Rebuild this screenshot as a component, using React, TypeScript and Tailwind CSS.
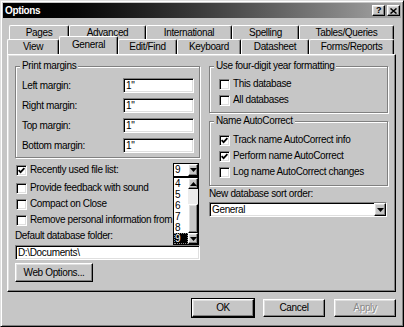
import React from "react";

const raised =
  "bg-[#c6c6c6] border border-t-white border-l-white border-b-black border-r-black shadow-[inset_-1px_-1px_0_#808080,inset_1px_1px_0_#dfdfdf]";
const sunken =
  "bg-white border border-t-[#808080] border-l-[#808080] border-b-white border-r-white shadow-[inset_1px_1px_0_#000,inset_-1px_-1px_0_#dfdfdf]";

function Check({ checked }: { checked?: boolean }) {
  return (
    <span className={`w-[11px] h-[11px] shrink-0 flex items-center justify-center ${sunken}`}>
      {checked && (
        <svg width="7" height="7" viewBox="0 0 7 7">
          <path d="M0.6 3.2 L2.6 5.2 L6.4 1.2" fill="none" stroke="#000" strokeWidth="1.7" />
        </svg>
      )}
    </span>
  );
}

function CheckRow({ checked, label }: { checked?: boolean; label: string }) {
  return (
    <div className="flex items-center h-[16px] gap-[3px] whitespace-nowrap">
      <Check checked={checked} />
      <span>{label}</span>
    </div>
  );
}

function Group({
  title,
  className,
  children,
}: {
  title: string;
  className?: string;
  children: React.ReactNode;
}) {
  return (
    <div
      className={`relative border border-[#808080] shadow-[inset_1px_1px_0_#fff,1px_1px_0_#fff] ${className ?? ""}`}
    >
      <span className="absolute -top-[7px] left-[4px] px-[2px] bg-[#c6c6c6] leading-[12px] whitespace-nowrap">
        {title}
      </span>
      {children}
    </div>
  );
}

function DownArrow() {
  return (
    <svg width="7" height="4" viewBox="0 0 7 4">
      <path d="M0 0h7L3.5 4z" fill="#000" />
    </svg>
  );
}
function UpArrow() {
  return (
    <svg width="7" height="4" viewBox="0 0 7 4">
      <path d="M0 4h7L3.5 0z" fill="#000" />
    </svg>
  );
}

function MarginRow({ label }: { label: string }) {
  return (
    <div className="flex items-center justify-between h-[15px]">
      <span>{label}</span>
      <span className={`w-[71px] h-[15px] flex items-center px-[2px] ${sunken}`}>1"</span>
    </div>
  );
}

function Tab({ label, w, selected }: { label: string; w: string; selected?: boolean }) {
  return (
    <div
      className={`${w} ${
        selected ? "h-[18px] -mt-[2px] relative z-10 pb-[2px]" : "h-full"
      } shrink-0 bg-[#c6c6c6] border-t border-l border-r border-t-white border-l-white border-r-black shadow-[inset_-1px_0_0_#808080] rounded-t-[2px] flex items-center justify-center whitespace-nowrap`}
    >
      {label}
    </div>
  );
}

export default function App() {
  const items = ["4", "5", "6", "7", "8", "9"];
  return (
    <div className="w-[404px] h-[327px] bg-[#c6c6c6] border border-t-[#dfdfdf] border-l-[#dfdfdf] border-b-black border-r-black shadow-[inset_1px_1px_0_#fff,inset_-1px_-1px_0_#808080] p-[2px] flex flex-col font-['Liberation_Sans',Arial,sans-serif] text-[10px] leading-[12px] tracking-[-0.35px] text-black overflow-hidden">
      {/* Title bar */}
      <div className="h-[15px] shrink-0 bg-gradient-to-r from-[#000] via-[#3c3c3c] to-[#a8a8a8] flex items-center justify-between pl-[2px] pr-[1px]">
        <span className="text-white font-bold text-[10px]">Options</span>
        <div className="flex gap-[2px]">
          <span className={`w-[13px] h-[11px] flex items-center justify-center font-bold text-[9px] leading-none ${raised}`}>
            ?
          </span>
          <span className={`w-[13px] h-[11px] flex items-center justify-center ${raised}`}>
            <svg width="7" height="6" viewBox="0 0 7 6">
              <path d="M0.5 0.5L6.5 5.5M6.5 0.5L0.5 5.5" stroke="#000" strokeWidth="1.5" />
            </svg>
          </span>
        </div>
      </div>

      {/* Tabs */}
      <div className="flex ml-[6px] mt-[7px] h-[14px] shrink-0">
        <Tab label="Pages" w="w-[60px]" />
        <Tab label="Advanced" w="w-[77px]" />
        <Tab label="International" w="w-[86px]" />
        <Tab label="Spelling" w="w-[67px]" />
        <Tab label="Tables/Queries" w="w-[95px]" />
      </div>
      <div className="flex ml-[4px] h-[15px] shrink-0 items-end">
        <Tab label="View" w="w-[52px]" />
        <Tab label="General" w="w-[59px]" selected />
        <Tab label="Edit/Find" w="w-[59px]" />
        <Tab label="Keyboard" w="w-[64px]" />
        <Tab label="Datasheet" w="w-[68px]" />
        <Tab label="Forms/Reports" w="w-[85px]" />
      </div>

      {/* Panel */}
      <div className="ml-[4px] w-[389px] h-[238px] shrink-0 border border-t-white border-l-white border-b-black border-r-black shadow-[inset_-1px_-1px_0_#808080,inset_1px_1px_0_#dfdfdf] pt-[11px] pl-[7px] flex gap-[9px]">
        {/* Left column */}
        <div className="w-[185px] flex flex-col">
          <Group title="Print margins" className="h-[92px] pt-[11px] pl-[6px] pr-[5px] flex flex-col gap-[5px]">
            <MarginRow label="Left margin:" />
            <MarginRow label="Right margin:" />
            <MarginRow label="Top margin:" />
            <MarginRow label="Bottom margin:" />
          </Group>

          <div className="mt-[5px] h-[14px] flex items-center justify-between pl-[1px] pr-[1px]">
            <div className="flex items-center gap-[3px] whitespace-nowrap">
              <Check checked />
              <span>Recently used file list:</span>
            </div>
            <div className="relative w-[26px] h-[14px]">
              <div className="w-full h-full bg-white border border-black flex items-stretch">
                <span className="flex-1 flex items-center pl-[1px]">9</span>
                <span className={`w-[10px] flex items-center justify-center ${raised}`}>
                  <DownArrow />
                </span>
              </div>
              {/* dropdown list */}
              <div className="absolute top-[14px] left-0 w-[26px] h-[68px] bg-white border border-black z-20 flex">
                <div className="flex-1 flex flex-col">
                  {items.map((n) => (
                    <span
                      key={n}
                      className={`h-[11px] leading-[11px] pl-[1px] ${
                        n === "9" ? "bg-black text-white outline-1 outline-dotted outline-[#888] -outline-offset-1" : ""
                      }`}
                    >
                      {n}
                    </span>
                  ))}
                </div>
                <div className="w-[10px] flex flex-col">
                  <span className={`h-[11px] flex items-center justify-center ${raised}`}>
                    <UpArrow />
                  </span>
                  <span className="h-[15px] bg-[#ececec]" />
                  <span className={`flex-1 ${raised}`} />
                  <span className={`h-[11px] flex items-center justify-center ${raised}`}>
                    <DownArrow />
                  </span>
                </div>
              </div>
            </div>
          </div>

          <div className="mt-[3px] pl-[1px] w-[158px] flex flex-col overflow-hidden">
            <CheckRow label="Provide feedback with sound" />
            <CheckRow label="Compact on Close" />
            <CheckRow label="Remove personal information from file properties on save" />
          </div>

          <div className="mt-[2px] h-[12px] whitespace-nowrap">Default database folder:</div>
          <div className={`mt-[3px] h-[15px] flex items-center px-[2px] ${sunken}`}>D:\Documents\</div>
          <button className={`mt-[3px] h-[19px] w-[78px] flex items-center justify-center ${raised}`}>
            Web Options...
          </button>
        </div>

        {/* Right column */}
        <div className="w-[179px] flex flex-col">
          <Group title="Use four-digit year formatting" className="h-[47px] pt-[9px] pl-[9px] flex flex-col">
            <CheckRow label="This database" />
            <CheckRow label="All databases" />
          </Group>
          <Group title="Name AutoCorrect" className="mt-[8px] h-[65px] pt-[10px] pl-[9px] flex flex-col">
            <CheckRow checked label="Track name AutoCorrect info" />
            <CheckRow checked label="Perform name AutoCorrect" />
            <CheckRow label="Log name AutoCorrect changes" />
          </Group>
          <div className="mt-[2px] h-[12px] whitespace-nowrap">New database sort order:</div>
          <div className={`mt-[2px] w-[178px] h-[15px] flex items-stretch ${sunken}`}>
            <span className="flex-1 flex items-center px-[2px]">General</span>
            <span className={`w-[12px] flex items-center justify-center ${raised}`}>
              <DownArrow />
            </span>
          </div>
        </div>
      </div>

      {/* Buttons */}
      <div className="ml-[4px] w-[389px] mt-[7px] flex justify-end gap-[9px]">
        <button className={`w-[62px] h-[18px] flex items-center justify-center outline outline-1 outline-black ${raised}`}>
          OK
        </button>
        <button className={`w-[62px] h-[18px] flex items-center justify-center ${raised}`}>Cancel</button>
        <button className={`w-[62px] h-[18px] flex items-center justify-center text-[#8a8a8a] [text-shadow:1px_1px_0_#fff] ${raised}`}>
          Apply
        </button>
      </div>
    </div>
  );
}
